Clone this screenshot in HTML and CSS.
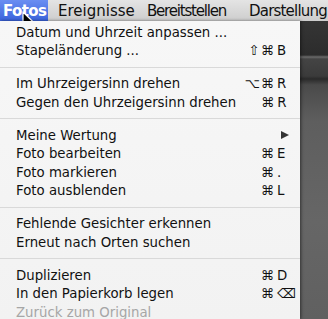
FILE: index.html
```html
<!DOCTYPE html>
<html lang="de">
<head>
    <meta charset="UTF-8">
    <title>Fotos Menü</title>
    <link rel="stylesheet" href="styles.css">
</head>
<body>
    <!-- Menu bar -->
    <div class="menubar">
        <span class="bar-item active">Fotos</span>
        <span class="bar-item events">Ereignisse</span>
        <span class="bar-item share">Bereitstellen</span>
        <span class="bar-item view">Darstellung</span>
    </div>

    <div class="screen">
        <!-- Dropdown menu -->
        <div class="menu">
            <div class="item"><span class="label">Datum und Uhrzeit anpassen ...</span></div>
            <div class="item"><span class="label">Stapeländerung ...</span><span class="mods">⇧⌘</span><span class="key">B</span></div>
            <div class="sep"></div>
            <div class="item"><span class="label">Im Uhrzeigersinn drehen</span><span class="mods">⌥⌘</span><span class="key">R</span></div>
            <div class="item"><span class="label">Gegen den Uhrzeigersinn drehen</span><span class="mods">⌘</span><span class="key">R</span></div>
            <div class="sep"></div>
            <div class="item"><span class="label">Meine Wertung</span><span class="arrow"></span></div>
            <div class="item"><span class="label">Foto bearbeiten</span><span class="mods">⌘</span><span class="key">E</span></div>
            <div class="item"><span class="label">Foto markieren</span><span class="mods">⌘</span><span class="key">.</span></div>
            <div class="item"><span class="label">Foto ausblenden</span><span class="mods">⌘</span><span class="key">L</span></div>
            <div class="sep"></div>
            <div class="item"><span class="label">Fehlende Gesichter erkennen</span></div>
            <div class="item"><span class="label">Erneut nach Orten suchen</span></div>
            <div class="sep"></div>
            <div class="item"><span class="label">Duplizieren</span><span class="mods">⌘</span><span class="key">D</span></div>
            <div class="item"><span class="label">In den Papierkorb legen</span><span class="mods">⌘</span><span class="key">⌫</span></div>
            <div class="item disabled"><span class="label">Zurück zum Original</span></div>
        </div>
        <div class="backdrop"></div>
    </div>

    <!-- Hand-drawn marker under the trash item -->
    <div class="marker">
        <div class="marker-thin"></div>
        <div class="marker-red"></div>
    </div>

    <!-- Mouse pointer -->
    <svg class="cursor" width="13" height="20" viewBox="0 0 13 20">
        <path d="M1 1 L1 16 L4.5 12.5 L7 18.5 L9.5 17.5 L7 11.8 L12 11.8 Z" fill="#000" stroke="#fff" stroke-width="1.2" stroke-linejoin="round"/>
    </svg>
</body>
</html>
```

FILE: styles.css
```css
body {
    margin: 0;
    width: 328px;
    height: 319px;
    overflow: hidden;
    position: relative;
    font-family: "DejaVu Sans", sans-serif;
    background-color: #5e5e5e;
}

/* Menu bar */
.menubar {
    display: flex;
    height: 21px;
    align-items: stretch;
    background: linear-gradient(#e4e4e4, #cdcdcd);
    font-size: 15px;
    color: #111;
    white-space: nowrap;
    overflow: hidden;
}

.bar-item {
    display: flex;
    align-items: center;
    flex-shrink: 0;
}

.bar-item.active {
    width: 45px;
    padding-left: 3px;
    background: linear-gradient(#6a8ef2, #3a63dc);
    color: #fff;
    font-weight: bold;
    letter-spacing: -0.6px;
}

.events {
    margin-left: 10px;
    width: 89px;
}

.share {
    width: 102px;
    letter-spacing: -1.2px;
}

.view {
    letter-spacing: -0.8px;
}

/* Screen below the bar */
.screen {
    display: flex;
    height: 298px;
}

.menu {
    width: 300px;
    flex-shrink: 0;
    padding-top: 2px;
    background: linear-gradient(#f7f7f7, #f2f2f2);
    box-shadow: 1px 0 3px rgba(0, 0, 0, 0.5);
    font-size: 13.3px;
    color: #111;
    z-index: 1;
}

.item {
    display: flex;
    align-items: center;
    height: 18.5px;
    padding-left: 16px;
    padding-right: 9px;
    white-space: nowrap;
}

.label {
    flex: 1;
}

.mods {
    width: 40px;
    text-align: right;
    padding-right: 2px;
    letter-spacing: 1px;
}

.key {
    width: 14px;
}

.arrow {
    width: 0;
    height: 0;
    margin-right: 2px;
    border-top: 4.5px solid transparent;
    border-bottom: 4.5px solid transparent;
    border-left: 8px solid #333;
}

.sep {
    height: 14.5px;
    display: flex;
    align-items: center;
}

.sep::before {
    content: "";
    flex: 1;
    height: 1px;
    background-color: #d9d9d9;
}

.disabled {
    color: #a6a6a6;
}

.backdrop {
    flex: 1;
    background: linear-gradient(#353535 0px, #2c2c2c 34px, #6a6a6a 36px, #444 38px, #3b3b3b 55px, #2a2a2a 58px, #4a4a4a 64px, #5e5e5e 100px, #666 200px, #606060 298px);
}

/* Annotation */
.marker {
    position: absolute;
    left: 4px;
    top: 295px;
    width: 182px;
}

.marker-thin {
    margin-left: 12px;
    height: 1px;
    background-color: #333;
}

.marker-red {
    margin-top: 4px;
    height: 3px;
    border-radius: 2px;
    background-color: #d8121c;
}

.cursor {
    position: absolute;
    left: 22px;
    top: 11px;
}
```
